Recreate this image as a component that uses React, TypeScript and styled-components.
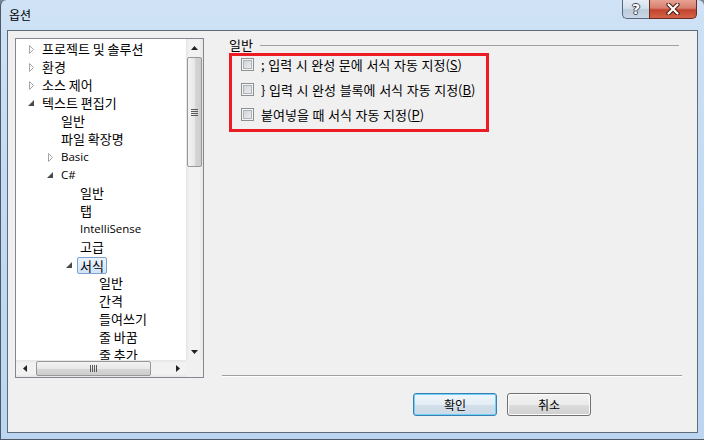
import React from "react";
import styled, { createGlobalStyle, css } from "styled-components";

const GlobalStyle = createGlobalStyle`
  html, body {
    margin: 0;
    padding: 0;
  }
  body {
    width: 704px;
    height: 440px;
    overflow: hidden;
    background: #7b8794;
    font-family: "Noto Sans CJK KR", "Noto Sans", sans-serif;
    font-size: 13px;
    color: #000;
  }
`;

type TreeItem = {
  text: string;
  level: number;
  state?: "open" | "closed";
  selected?: boolean;
  latin?: boolean;
};

const treeItems: TreeItem[] = [
  { text: "프로젝트 및 솔루션", level: 0, state: "closed" },
  { text: "환경", level: 0, state: "closed" },
  { text: "소스 제어", level: 0, state: "closed" },
  { text: "텍스트 편집기", level: 0, state: "open" },
  { text: "일반", level: 1 },
  { text: "파일 확장명", level: 1 },
  { text: "Basic", level: 1, state: "closed", latin: true },
  { text: "C#", level: 1, state: "open", latin: true },
  { text: "일반", level: 2 },
  { text: "탭", level: 2 },
  { text: "IntelliSense", level: 2, latin: true },
  { text: "고급", level: 2 },
  { text: "서식", level: 2, state: "open", selected: true },
  { text: "일반", level: 3 },
  { text: "간격", level: 3 },
  { text: "들여쓰기", level: 3 },
  { text: "줄 바꿈", level: 3 },
  { text: "줄 추가", level: 3 },
];

const options = [
  { before: "; 입력 시 완성 문에 서식 자동 지정(", key: "S" },
  { before: "} 입력 시 완성 블록에 서식 자동 지정(", key: "B" },
  { before: "붙여넣을 때 서식 자동 지정(", key: "P" },
];

const Window = styled.div`
  width: 704px;
  height: 440px;
  box-sizing: border-box;
  display: flex;
  flex-direction: column;
  border-radius: 6px 6px 0 0;
  border-left: 1px solid #4e5866;
  border-bottom: 1px solid #4e5866;
  background: linear-gradient(180deg, #cfe2f6 0%, #c3dbf3 40%, #bcd6f1 100%);
`;

const TitleBar = styled.div`
  height: 30px;
  display: flex;
  align-items: flex-start;
  justify-content: space-between;
  padding: 0 7px 0 8px;
`;

const Title = styled.div`
  padding-top: 6px;
  line-height: 18px;
  font-size: 12px;
`;

const CaptionButtons = styled.div`
  display: flex;
`;

const CaptionButton = styled.div<{ $close?: boolean }>`
  height: 19px;
  box-sizing: border-box;
  display: flex;
  align-items: center;
  justify-content: center;
  border: 1px solid #59677a;
  border-top: none;
  ${(p) =>
    p.$close
      ? css`
          width: 48px;
          border-color: #6b2b22;
          border-radius: 0 0 5px 0;
          background: linear-gradient(180deg, #e8a394 0%, #d77f6e 45%, #c2432f 55%, #d36448 100%);
        `
      : css`
          width: 27px;
          border-right: none;
          border-radius: 0 0 0 5px;
          background: linear-gradient(180deg, #e5edf6 0%, #d4e0ec 45%, #bccbdc 55%, #c9d7e6 100%);
        `}
`;

const HelpGlyph = styled.span`
  font-family: "DejaVu Sans", sans-serif;
  font-weight: bold;
  font-size: 14px;
  line-height: 14px;
  color: #fff;
  text-shadow: -1px 0 #3c4656, 1px 0 #3c4656, 0 -1px #3c4656, 0 1px #3c4656;
`;

const Client = styled.div`
  flex: 1;
  margin: 0 6px 6px 6px;
  border: 1px solid #5f6b79;
  background: #f0f0f0;
  display: grid;
  grid-template-columns: 189px 1fr;
  grid-template-rows: 340px auto;
  padding: 7px 0 0 7px;
`;

const TreeBox = styled.div`
  box-sizing: border-box;
  border: 1px solid #828790;
  background: #fff;
  display: grid;
  grid-template-columns: 1fr 17px;
  grid-template-rows: 1fr 17px;
  overflow: hidden;
`;

const TreeContent = styled.div`
  overflow: hidden;
  padding-top: 1px;
`;

const TreeRow = styled.div<{ $level: number }>`
  height: 18px;
  display: flex;
  align-items: center;
  padding-left: ${(p) => 11 + p.$level * 19}px;
  white-space: nowrap;
  line-height: 18px;
`;

const Expander = styled.span<{ $open?: boolean }>`
  width: 15px;
  flex: none;
  display: flex;
  align-items: center;
  padding-left: ${(p) => (p.$open ? 1 : 2)}px;
  box-sizing: border-box;
`;

const ItemLabel = styled.span<{ $selected?: boolean; $latin?: boolean }>`
  ${(p) =>
    p.$latin &&
    css`
      font-family: "Open Sans", "Noto Sans", sans-serif;
      font-weight: 400;
      font-size: 11.5px;
    `}
  ${(p) =>
    p.$selected &&
    css`
      margin-left: -3px;
      padding: 0 2px;
      height: 15px;
      line-height: 15px;
      border: 1px solid #7da2ce;
      border-radius: 2px;
      background: linear-gradient(180deg, #ebf4fd 0%, #cfe4fb 100%);
    `}
`;

const VScroll = styled.div`
  display: flex;
  flex-direction: column;
  background: linear-gradient(90deg, #e6e6e6 0%, #f2f2f2 20%, #f2f2f2 80%, #e6e6e6 100%);
`;

const HScroll = styled.div`
  display: flex;
  background: linear-gradient(180deg, #e6e6e6 0%, #f2f2f2 20%, #f2f2f2 80%, #e6e6e6 100%);
`;

const ArrowButton = styled.div`
  width: 17px;
  height: 17px;
  flex: none;
  display: flex;
  align-items: center;
  justify-content: center;
`;

const Track = styled.div<{ $horizontal?: boolean }>`
  flex: 1;
  display: flex;
  flex-direction: ${(p) => (p.$horizontal ? "row" : "column")};
`;

const Thumb = styled.div<{ $horizontal?: boolean }>`
  box-sizing: border-box;
  border: 1px solid #979797;
  border-radius: 2px;
  display: flex;
  align-items: center;
  justify-content: center;
  ${(p) =>
    p.$horizontal
      ? css`
          width: 115px;
          height: 15px;
          margin: 1px 0 0 3px;
          background: linear-gradient(180deg, #f3f3f3 0%, #e8e8e8 50%, #d6d6d6 51%, #cdcdcd 100%);
        `
      : css`
          width: 15px;
          height: 110px;
          margin: 1px 0 0 1px;
          background: linear-gradient(90deg, #f3f3f3 0%, #e8e8e8 50%, #d6d6d6 51%, #cdcdcd 100%);
        `}
`;

const Grip = styled.div<{ $horizontal?: boolean }>`
  display: flex;
  flex-direction: ${(p) => (p.$horizontal ? "row" : "column")};
  gap: 1px;
  & > span {
    background: #5a5a5a;
    ${(p) => (p.$horizontal ? "width: 1px; height: 7px;" : "width: 7px; height: 1px;")}
  }
`;

const Corner = styled.div`
  background: #f0f0f0;
`;

const RightPane = styled.div`
  display: flex;
  flex-direction: column;
  padding: 0 15px 0 18px;
`;

const GroupHeader = styled.div`
  height: 14px;
  display: flex;
  align-items: center;
  padding-left: 7px;
  line-height: 14px;
`;

const GroupLine = styled.div`
  flex: 1;
  margin: 0 3px 0 7px;
  height: 0;
  border-top: 1px solid #a0a0a0;
`;

const Highlight = styled.div`
  width: 260px;
  box-sizing: border-box;
  margin: 1px 0 0 7px;
  border: 3px solid #ed1c24;
  padding: 0 0 6px 9px;
  display: flex;
  flex-direction: column;
  gap: 8px;
`;

const CheckRow = styled.label`
  height: 17px;
  display: flex;
  align-items: center;
  gap: 7px;
  white-space: nowrap;
  word-spacing: 0.7px;
`;

const CheckBox = styled.span`
  width: 13px;
  height: 13px;
  box-sizing: border-box;
  flex: none;
  border: 1px solid #8e8f8f;
  background: linear-gradient(135deg, #cbcfd5 0%, #f0f1f3 100%);
  box-shadow: inset 0 0 0 1px #f4f4f4, inset 0 0 0 2px #aeb3b9;
`;

const Separator = styled.div`
  margin-top: auto;
  margin-bottom: 1px;
  border-top: 1px solid #a0a0a0;
  border-bottom: 1px solid #fff;
`;

const ButtonRow = styled.div`
  grid-column: 1 / -1;
  display: flex;
  justify-content: flex-end;
  gap: 10px;
  margin-top: 15px;
  padding-right: 106px;
`;

const Button = styled.div<{ $default?: boolean }>`
  width: 84px;
  height: 23px;
  box-sizing: border-box;
  border-radius: 3px;
  display: flex;
  align-items: center;
  justify-content: center;
  font-size: 12px;
  line-height: 14px;
  ${(p) =>
    p.$default
      ? css`
          border: 1px solid #3c7fb1;
          box-shadow: inset 0 0 0 1px #6fd0f8;
          background: linear-gradient(180deg, #f0f6fb 0%, #e4edf5 50%, #d3e0eb 51%, #cbd9e6 100%);
        `
      : css`
          border: 1px solid #707070;
          box-shadow: inset 0 0 0 1px #fcfcfc;
          background: linear-gradient(180deg, #f2f2f2 0%, #ebebeb 50%, #dddddd 51%, #cfcfcf 100%);
        `}
`;

const ClosedArrow = () => (
  <svg width="6" height="9" viewBox="0 0 6 9">
    <polygon points="0.5,0.5 4.5,4.5 0.5,8.5" fill="#fff" stroke="#a6a6a6" />
  </svg>
);

const OpenArrow = () => (
  <svg width="6" height="6" viewBox="0 0 6 6">
    <polygon points="6,0 6,6 0,6" fill="#4a4a4a" />
  </svg>
);

const Tri = ({ dir }: { dir: "up" | "down" | "left" | "right" }) => {
  const pts = {
    up: "0,4 7,4 3.5,0",
    down: "0,0 7,0 3.5,4",
    left: "4,0 4,7 0,3.5",
    right: "0,0 0,7 4,3.5",
  }[dir];
  const vertical = dir === "up" || dir === "down";
  return (
    <svg width={vertical ? 7 : 4} height={vertical ? 4 : 7} viewBox={vertical ? "0 0 7 4" : "0 0 4 7"}>
      <polygon points={pts} fill="#222" />
    </svg>
  );
};

const CloseGlyph = () => (
  <svg width="14" height="12" viewBox="0 0 14 12">
    <path d="M2.5 1.5 L11.5 10.5 M11.5 1.5 L2.5 10.5" stroke="#4a1a12" strokeWidth="4.2" strokeLinecap="round" />
    <path d="M2.5 1.5 L11.5 10.5 M11.5 1.5 L2.5 10.5" stroke="#fff" strokeWidth="2.2" strokeLinecap="round" />
  </svg>
);

export default function App() {
  return (
    <>
      <GlobalStyle />
      <Window>
        <TitleBar>
          <Title>옵션</Title>
          <CaptionButtons>
            <CaptionButton>
              <HelpGlyph>?</HelpGlyph>
            </CaptionButton>
            <CaptionButton $close>
              <CloseGlyph />
            </CaptionButton>
          </CaptionButtons>
        </TitleBar>
        <Client>
          <TreeBox>
            <TreeContent>
              {treeItems.map((item, i) => (
                <TreeRow key={i} $level={item.level}>
                  <Expander $open={item.state === "open"}>
                    {item.state === "closed" && <ClosedArrow />}
                    {item.state === "open" && <OpenArrow />}
                  </Expander>
                  <ItemLabel $selected={item.selected} $latin={item.latin}>
                    {item.text}
                  </ItemLabel>
                </TreeRow>
              ))}
            </TreeContent>
            <VScroll>
              <ArrowButton>
                <Tri dir="up" />
              </ArrowButton>
              <Track>
                <Thumb>
                  <Grip>
                    <span />
                    <span />
                    <span />
                    <span />
                  </Grip>
                </Thumb>
              </Track>
              <ArrowButton>
                <Tri dir="down" />
              </ArrowButton>
            </VScroll>
            <HScroll>
              <ArrowButton>
                <Tri dir="left" />
              </ArrowButton>
              <Track $horizontal>
                <Thumb $horizontal>
                  <Grip $horizontal>
                    <span />
                    <span />
                    <span />
                    <span />
                  </Grip>
                </Thumb>
              </Track>
              <ArrowButton>
                <Tri dir="right" />
              </ArrowButton>
            </HScroll>
            <Corner />
          </TreeBox>
          <RightPane>
            <GroupHeader>
              일반
              <GroupLine />
            </GroupHeader>
            <Highlight>
              {options.map((o) => (
                <CheckRow key={o.key}>
                  <CheckBox />
                  <span>
                    {o.before}
                    <u>{o.key}</u>)
                  </span>
                </CheckRow>
              ))}
            </Highlight>
            <Separator />
          </RightPane>
          <ButtonRow>
            <Button $default>확인</Button>
            <Button>취소</Button>
          </ButtonRow>
        </Client>
      </Window>
    </>
  );
}
